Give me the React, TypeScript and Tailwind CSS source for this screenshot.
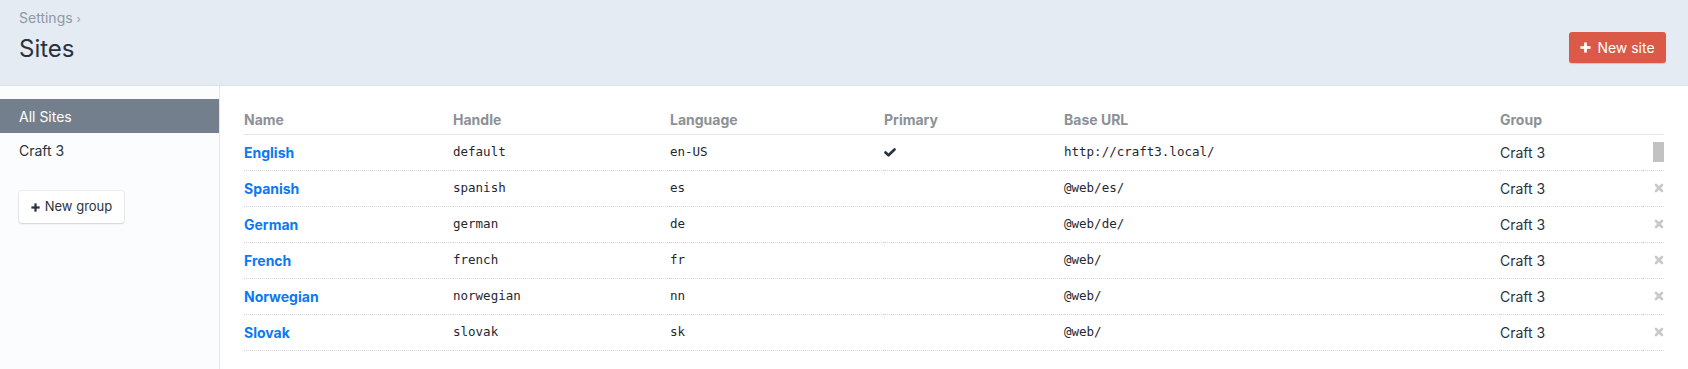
const sites = [
  { name: 'English', handle: 'default', lang: 'en-US', primary: true, url: 'http://craft3.local/' },
  { name: 'Spanish', handle: 'spanish', lang: 'es', primary: false, url: '@web/es/' },
  { name: 'German', handle: 'german', lang: 'de', primary: false, url: '@web/de/' },
  { name: 'French', handle: 'french', lang: 'fr', primary: false, url: '@web/' },
  { name: 'Norwegian', handle: 'norwegian', lang: 'nn', primary: false, url: '@web/' },
  { name: 'Slovak', handle: 'slovak', lang: 'sk', primary: false, url: '@web/' },
]

const mono = "font-['DejaVu_Sans_Mono',monospace] text-[12.5px] text-[#1f2731]"

function PlusIcon({ className }: { className?: string }) {
  return (
    <svg viewBox="0 0 12 12" className={className} fill="currentColor">
      <rect x="4.5" y="0.5" width="3" height="11" />
      <rect x="0.5" y="4.5" width="11" height="3" />
    </svg>
  )
}

function CheckIcon() {
  return (
    <svg viewBox="0 0 12 9" className="w-[12px] h-[9px] text-[#29323d]" fill="none" stroke="currentColor" strokeWidth="2.6" strokeLinecap="round" strokeLinejoin="round">
      <polyline points="1.5,4.5 4.5,7.3 10.5,1.5" />
    </svg>
  )
}

function DeleteIcon() {
  return (
    <svg viewBox="0 0 10 10" className="ml-auto w-[10px] h-[10px] text-[#c9c9c9]" fill="none" stroke="currentColor" strokeWidth="2.6" strokeLinecap="round">
      <line x1="2" y1="2" x2="8" y2="8" />
      <line x1="8" y1="2" x2="2" y2="8" />
    </svg>
  )
}

export default function App() {
  return (
    <div className="w-[1688px] h-[369px] overflow-hidden bg-white font-['Inter',sans-serif] text-[#29323d] text-[14px]">
      <header className="h-[86px] bg-[#e4ebf3] border-b border-[#dae1e9] px-[19px] flex justify-between">
        <div>
          <div className="mt-[9px] h-[18px] leading-[18px] text-[#8f98a3] text-[14px]">
            Settings <span className="text-[11px]">›</span>
          </div>
          <h1 className="mt-[7px] text-[24px] leading-[30px] font-normal text-[#29323d]">Sites</h1>
        </div>
        <div className="pt-[32px] pr-[3px]">
          <button className="h-[31px] w-[97px] rounded-[3px] bg-[#da5a47] text-white text-[14px] flex items-center justify-center gap-[6px] shadow-[0_1px_1px_rgba(0,0,0,0.15)]">
            <PlusIcon className="w-[11px] h-[11px]" />
            New site
          </button>
        </div>
      </header>

      <div className="flex h-[283px]">
        <aside className="w-[220px] shrink-0 bg-[#fbfcfe] border-r border-[#e3e5e8] pt-[13px]">
          <div className="h-[34px] bg-[#737f8c] text-white px-[19px] flex items-center">All Sites</div>
          <div className="h-[34px] px-[19px] flex items-center">Craft 3</div>
          <div className="px-[19px] pt-[24px]">
            <button className="h-[32px] w-[105px] rounded-[3px] bg-white shadow-[0_0_0_1px_rgba(0,0,0,0.05),0_1px_2px_rgba(0,0,0,0.12)] flex items-center justify-center gap-[5px] text-[13px] text-[#29323d]">
              <PlusIcon className="w-[9px] h-[9px]" />
              New group
            </button>
          </div>
        </aside>

        <main className="flex-1 px-[24px] pt-[23px]">
          <table className="w-full border-collapse table-fixed">
            <colgroup>
              <col className="w-[209px]" />
              <col className="w-[217px]" />
              <col className="w-[214px]" />
              <col className="w-[180px]" />
              <col className="w-[436px]" />
              <col />
              <col className="w-[22px]" />
            </colgroup>
            <thead>
              <tr className="h-[25px] border-b border-[#e3e5e8] text-left text-[#8c9196] font-bold">
                <th className="pb-[3px] font-bold">Name</th>
                <th className="pb-[3px] font-bold">Handle</th>
                <th className="pb-[3px] font-bold">Language</th>
                <th className="pb-[3px] font-bold">Primary</th>
                <th className="pb-[3px] font-bold">Base URL</th>
                <th className="pb-[3px] font-bold">Group</th>
                <th />
              </tr>
            </thead>
            <tbody>
              {sites.map((s, i) => (
                <tr key={s.handle} className="h-[36px] border-b border-dotted border-[#d3d7dc]">
                  <td className="font-bold text-[#0d78f2]">{s.name}</td>
                  <td className={mono}>{s.handle}</td>
                  <td className={mono}>{s.lang}</td>
                  <td>{s.primary && <CheckIcon />}</td>
                  <td className={mono}>{s.url}</td>
                  <td>Craft 3</td>
                  <td className="text-right">
                    {i === 0 ? (
                      <div className="ml-auto w-[11px] h-[20px] bg-[#c2c2c2]" />
                    ) : (
                      <DeleteIcon />
                    )}
                  </td>
                </tr>
              ))}
            </tbody>
          </table>
        </main>
      </div>
    </div>
  )
}
